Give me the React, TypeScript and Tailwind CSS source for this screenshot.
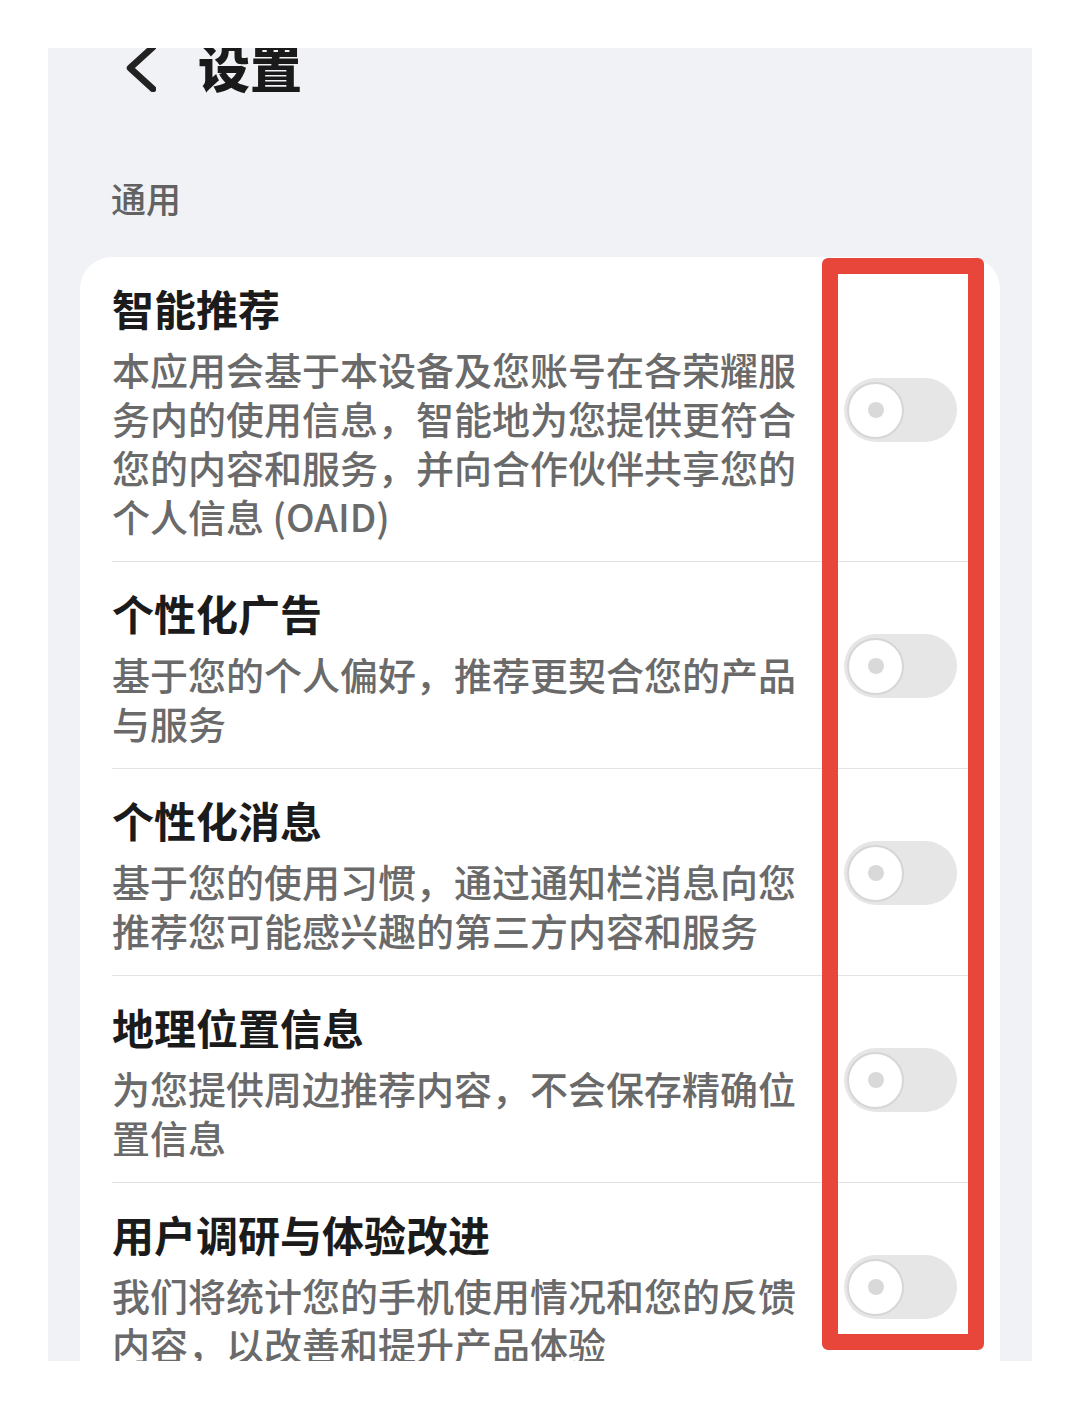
import React from 'react'

const items = [
  {
    title: '智能推荐',
    desc: '本应用会基于本设备及您账号在各荣耀服务内的使用信息，智能地为您提供更符合您的内容和服务，并向合作伙伴共享您的个人信息 (OAID)',
  },
  { title: '个性化广告', desc: '基于您的个人偏好，推荐更契合您的产品与服务' },
  { title: '个性化消息', desc: '基于您的使用习惯，通过通知栏消息向您推荐您可能感兴趣的第三方内容和服务' },
  { title: '地理位置信息', desc: '为您提供周边推荐内容，不会保存精确位置信息' },
  { title: '用户调研与体验改进', desc: '我们将统计您的手机使用情况和您的反馈内容，以改善和提升产品体验' },
]

function Toggle() {
  return (
    <div className="flex h-[64px] w-[113px] shrink-0 items-center rounded-full bg-[#e6e6e6] pl-[3px]">
      <div className="flex h-[57px] w-[57px] items-center justify-center rounded-full border-2 border-[#d6d6d6] bg-white">
        <div className="h-[16px] w-[16px] rounded-full bg-[#d9d9d9]" />
      </div>
    </div>
  )
}

export default function App() {
  return (
    <div
      className="relative h-[1409px] w-[1080px] overflow-hidden bg-white pt-[48px]"
      style={{ fontFamily: '"Noto Sans CJK SC", "Noto Sans", sans-serif' }}
    >
      <div className="mx-[48px] h-[1313px] overflow-hidden bg-[#f1f2f6]">
        {/* header */}
        <div className="-mt-[8px] flex h-[51px] items-center pl-[76px]">
          <svg width="32" height="48" viewBox="0 0 32 48" fill="none" className="mt-[5px] shrink-0">
            <path d="M29 3 L6 24 L29 45" stroke="#222" strokeWidth="6.5" strokeLinecap="round" strokeLinejoin="round" />
          </svg>
          <span className="ml-[42px] text-[52px] font-black leading-none text-[#1a1a1a]">设置</span>
        </div>

        <div className="mt-[89px] pl-[63px] text-[35px] font-medium leading-none text-[#626262]">通用</div>

        {/* list card */}
        <div className="ml-[32px] mt-[42px] w-[920px] rounded-t-[32px] bg-white px-[32px]">
          {items.map((it, i) => (
            <div
              key={it.title}
              className={`flex items-center pb-[21px] pt-[23px] ${i < items.length - 1 ? 'border-b border-[#e3e3e3]' : ''}`}
            >
              <div className="w-[700px] shrink-0">
                <div className="text-[42px] font-bold leading-[56px] text-[#1b1b1b]">{it.title}</div>
                <div className="mt-2 text-[38px] font-medium leading-[49px] text-[#6a6a6a]">{it.desc}</div>
              </div>
              <div className="ml-auto mr-[11px]">
                <Toggle />
              </div>
            </div>
          ))}
        </div>
      </div>

      {/* red highlight annotation */}
      <div className="absolute left-[822px] top-[258px] h-[1092px] w-[162px] rounded-[6px] border-[16px] border-[#e8463a]" />
    </div>
  )
}
